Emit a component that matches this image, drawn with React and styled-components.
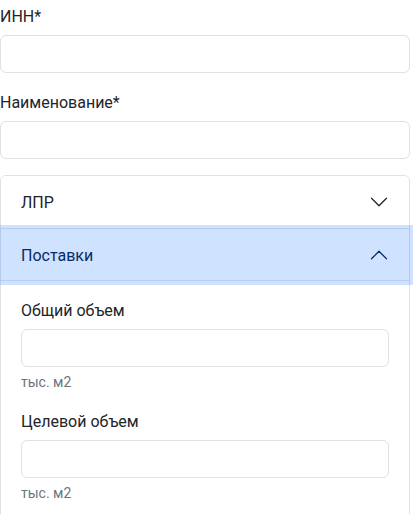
import React, { useState } from "react";
import styled, { createGlobalStyle } from "styled-components";

const Global = createGlobalStyle`
  * { box-sizing: border-box; }
  html, body { margin: 0; padding: 0; background: #fff; }
  body {
    font-family: Roboto, "Noto Sans", "Liberation Sans", sans-serif;
    font-size: 16px;
    line-height: 1.5;
    color: #212529;
  }
`;

const Page = styled.div`
  width: 410px;
  padding-top: 3px;
`;

const Group = styled.div`
  margin-bottom: 16px;
`;

const Label = styled.label`
  display: block;
  padding-top: 2px;
  margin-bottom: 6px;
  font-size: 16px;
  line-height: 24px;
  color: #212529;
`;

const Input = styled.input`
  display: block;
  width: 100%;
  height: 38px;
  padding: 6px 12px;
  font: inherit;
  color: #212529;
  background: #fff;
  border: 1px solid #dee2e6;
  border-radius: 6px;
  outline: none;
`;

const Hint = styled.div`
  margin-top: 6px;
  font-size: 14px;
  line-height: 19px;
  color: #6c757d;
`;

const Accordion = styled.div`
  border-radius: 6px;
`;

const Item = styled.div`
  border: 1px solid #dee2e6;
  border-top-width: ${(p) => (p.$first ? "1px" : "0")};
  border-top-left-radius: ${(p) => (p.$first ? "6px" : "0")};
  border-top-right-radius: ${(p) => (p.$first ? "6px" : "0")};
  background: #fff;
`;

const HeaderButton = styled.button`
  position: relative;
  z-index: ${(p) => (p.$active ? 3 : 1)};
  display: flex;
  align-items: center;
  justify-content: space-between;
  width: 100%;
  height: 52px;
  padding: 2px 20px 0;
  border: 0;
  border-radius: ${(p) => (p.$first ? "5px 5px 0 0" : "0")};
  font: inherit;
  font-size: 16px;
  line-height: 24px;
  text-align: left;
  cursor: pointer;
  color: ${(p) => (p.$active ? "#052c65" : "#212529")};
  background: ${(p) => (p.$active ? "#cfe2ff" : "#fff")};
  box-shadow: ${(p) =>
    p.$active
      ? "inset 0 -1px 0 #b9cdec, 0 0 0 4px rgba(13, 110, 253, 0.2)"
      : "none"};
  outline: none;
`;

const Chevron = styled.svg`
  width: 20px;
  height: 20px;
  flex-shrink: 0;
  margin-top: -2px;
  transform: ${(p) => (p.$open ? "rotate(-180deg)" : "none")};
`;

const Body = styled.div`
  padding: 16px 20px 0;
`;

function Icon({ open }) {
  return (
    <Chevron $open={open} viewBox="0 0 16 16" fill="none">
      <path
        d="M2 5L8 11L14 5"
        stroke={open ? "#052c65" : "#212529"}
        strokeWidth="1"
        strokeLinecap="round"
        strokeLinejoin="round"
      />
    </Chevron>
  );
}

export default function App() {
  const [open, setOpen] = useState("supply");
  return (
    <>
      <Global />
      <Page>
        <Group>
          <Label>ИНН*</Label>
          <Input type="text" />
        </Group>
        <Group>
          <Label>Наименование*</Label>
          <Input type="text" />
        </Group>
        <Accordion>
          <Item $first>
            <HeaderButton
              $first
              $active={open === "lpr"}
              onClick={() => setOpen(open === "lpr" ? null : "lpr")}
            >
              ЛПР
              <Icon open={open === "lpr"} />
            </HeaderButton>
          </Item>
          <Item>
            <HeaderButton
              $active={open === "supply"}
              onClick={() => setOpen(open === "supply" ? null : "supply")}
            >
              Поставки
              <Icon open={open === "supply"} />
            </HeaderButton>
            {open === "supply" && (
              <Body>
                <Group>
                  <Label>Общий объем</Label>
                  <Input type="text" />
                  <Hint>тыс. м2</Hint>
                </Group>
                <Group>
                  <Label>Целевой объем</Label>
                  <Input type="text" />
                  <Hint>тыс. м2</Hint>
                </Group>
              </Body>
            )}
          </Item>
        </Accordion>
      </Page>
    </>
  );
}
